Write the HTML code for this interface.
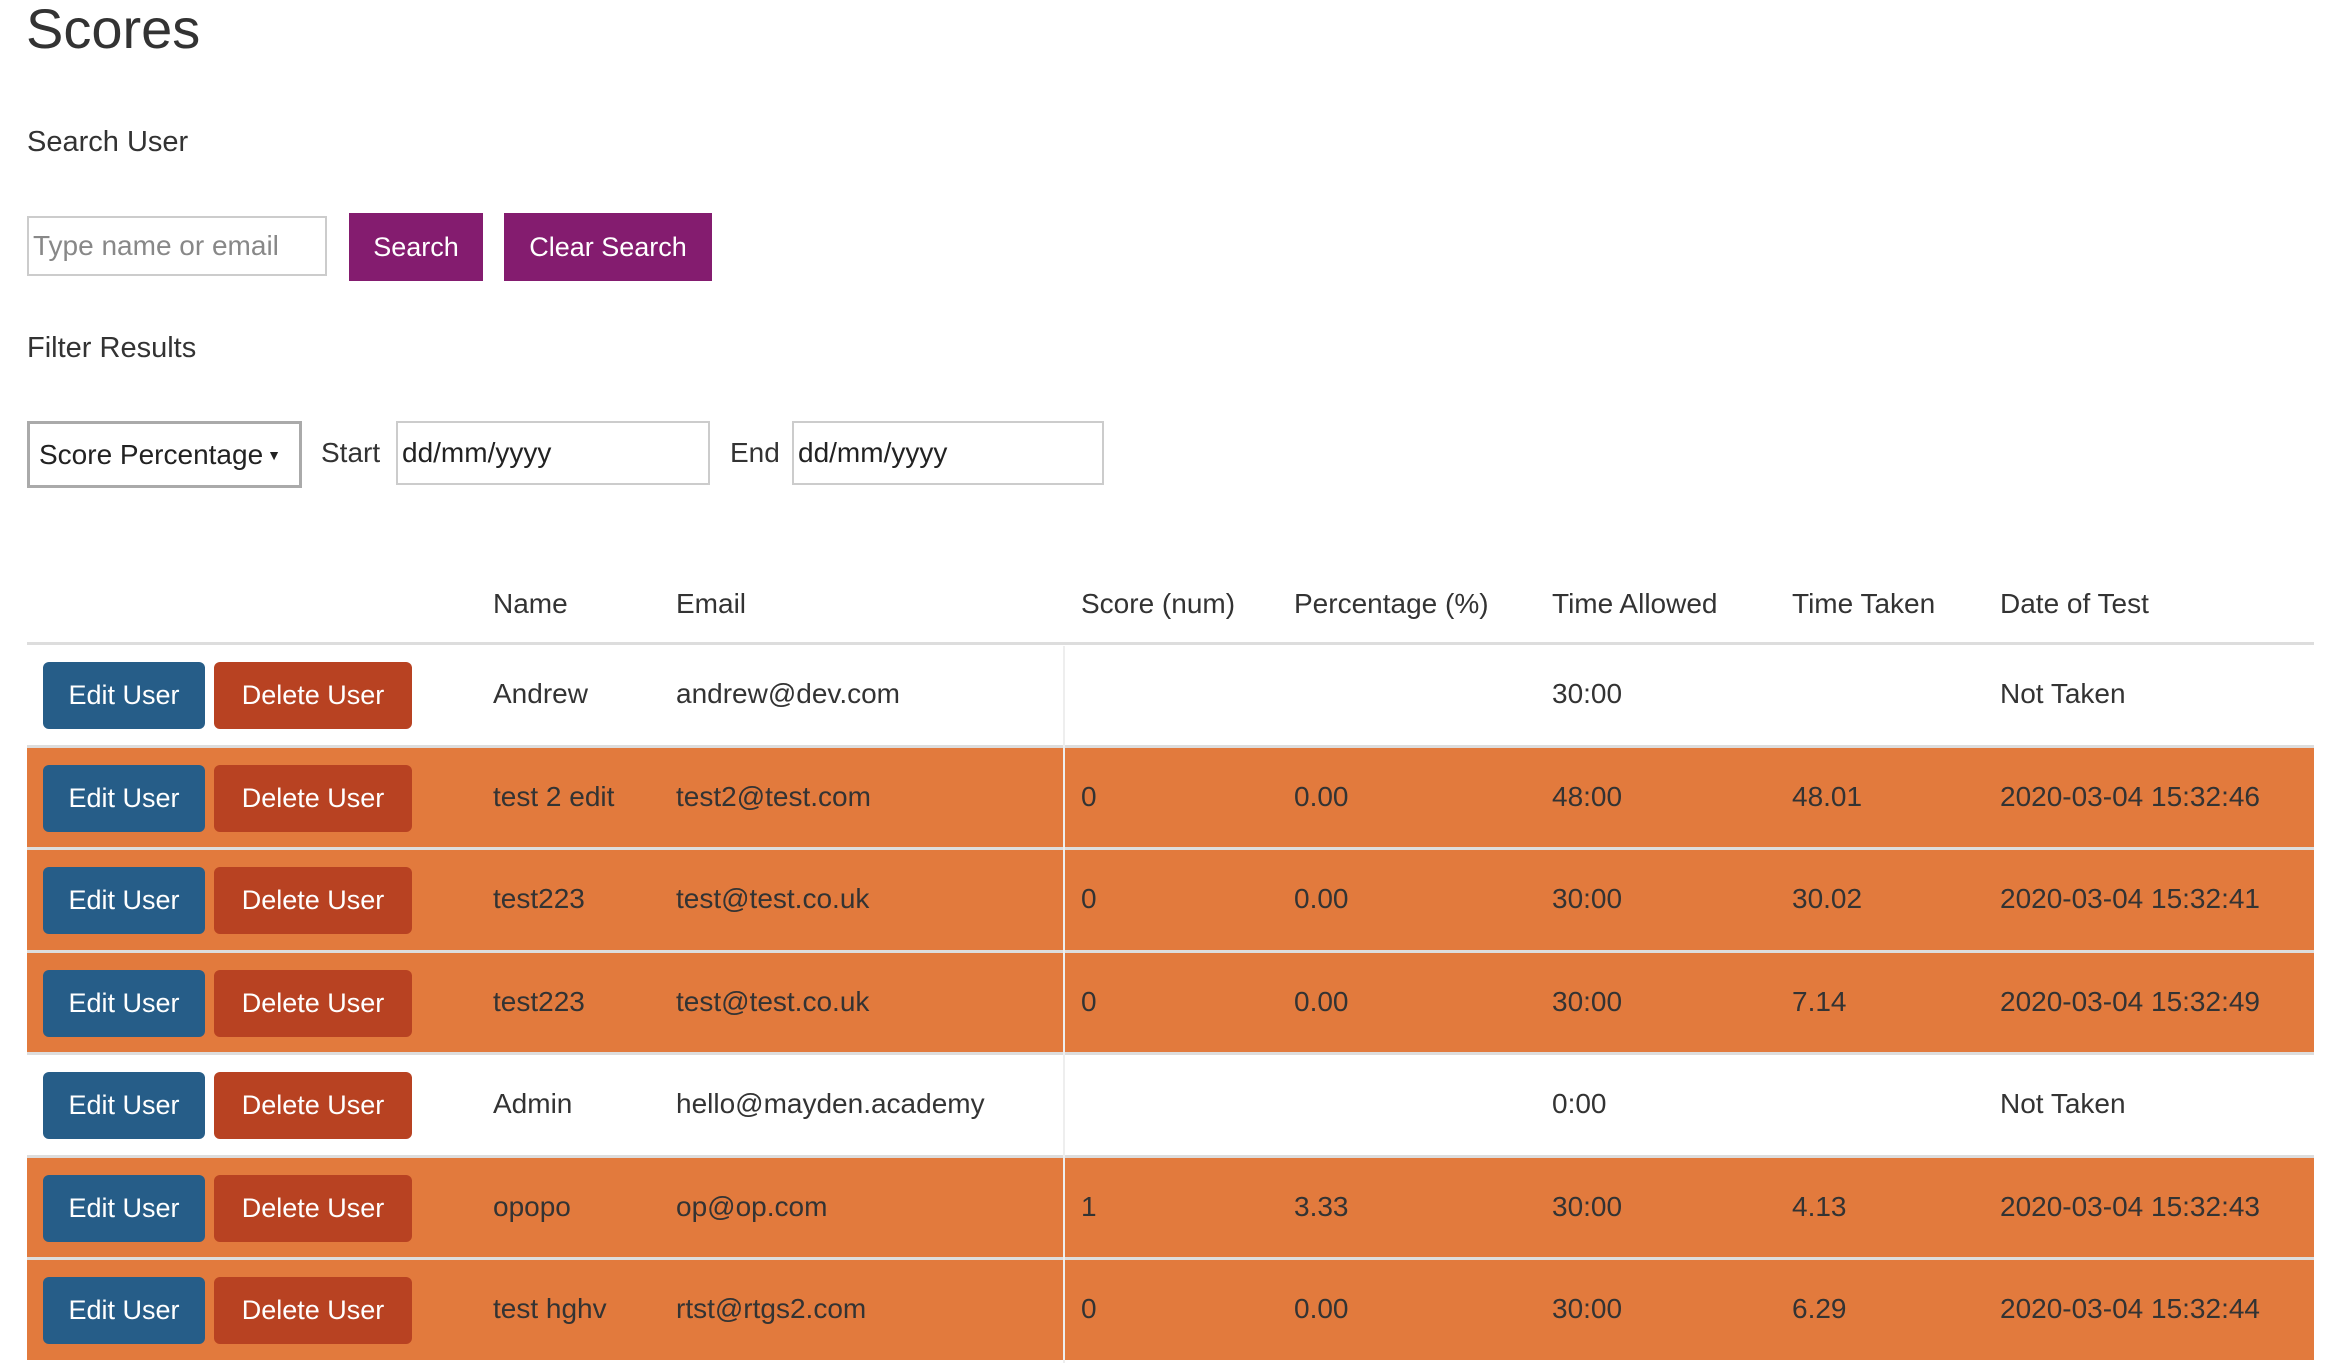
<!DOCTYPE html>
<html><head><meta charset="utf-8"><style>
*{box-sizing:border-box;margin:0;padding:0}
body{width:2338px;height:1363px;overflow:hidden;background:#fff;font-family:"Liberation Sans",sans-serif;color:#333;position:relative}
.a{position:absolute;white-space:nowrap}
.t{font-size:28px;line-height:1}
.btn{position:absolute;color:#fff;font-size:27px;display:flex;align-items:center;justify-content:center}
.inp{position:absolute;border:2px solid #ccc;background:#fff;font-size:28px;display:flex;align-items:center;padding-left:4px}
.row{position:absolute;left:27px;width:2287px;height:103px;border-top:3px solid #ddd}
.o{background:#e27a3d}
.vl{position:absolute;left:1063px;top:646px;width:2px;height:717px;background:#eee}
</style></head><body>
<div class="a" style="left:26px;top:-2px;font-size:56px;line-height:1.1">Scores</div>
<div class="a t" style="left:27px;top:128px;font-size:29px">Search User</div>
<div class="inp" style="left:27px;top:216px;width:300px;height:60px;color:#888">Type name or email</div>
<div class="btn" style="left:349px;top:213px;width:134px;height:68px;background:#841c6f">Search</div>
<div class="btn" style="left:504px;top:213px;width:208px;height:68px;background:#841c6f">Clear Search</div>
<div class="a t" style="left:27px;top:334px;font-size:29px">Filter Results</div>
<div class="inp" style="left:27px;top:421px;width:275px;height:67px;border:3px solid #aaa;padding-left:9px;color:#222">Score Percentage<span style="font-size:14px;margin-left:4px">▼</span></div>
<div class="a t" style="left:321px;top:439px">Start</div>
<div class="inp" style="left:396px;top:421px;width:314px;height:64px;color:#222">dd/mm/yyyy</div>
<div class="a t" style="left:730px;top:439px">End</div>
<div class="inp" style="left:792px;top:421px;width:312px;height:64px;color:#222">dd/mm/yyyy</div>

<div class="a t" style="left:493px;top:590px">Name</div>
<div class="a t" style="left:676px;top:590px">Email</div>
<div class="a t" style="left:1081px;top:590px">Score (num)</div>
<div class="a t" style="left:1294px;top:590px">Percentage (%)</div>
<div class="a t" style="left:1552px;top:590px">Time Allowed</div>
<div class="a t" style="left:1792px;top:590px">Time Taken</div>
<div class="a t" style="left:2000px;top:590px">Date of Test</div>

<div id="rows"></div>
<script>
var d=[
["Andrew","andrew@dev.com","","","30:00","","Not Taken",0],
["test 2 edit","test2@test.com","0","0.00","48:00","48.01","2020-03-04 15:32:46",1],
["test223","test@test.co.uk","0","0.00","30:00","30.02","2020-03-04 15:32:41",1],
["test223","test@test.co.uk","0","0.00","30:00","7.14","2020-03-04 15:32:49",1],
["Admin","hello@mayden.academy","","","0:00","","Not Taken",0],
["opopo","op@op.com","1","3.33","30:00","4.13","2020-03-04 15:32:43",1],
["test hghv","rtst@rtgs2.com","0","0.00","30:00","6.29","2020-03-04 15:32:44",1]];
var xs=[493,676,1081,1294,1552,1792,2000],h="";
d.forEach(function(r,i){var y=Math.round(642+i*102.5);
h+='<div class="row'+(r[7]?' o':'')+'" style="top:'+y+'px"></div>';
h+='<div class="btn" style="left:43px;top:'+(y+20)+'px;width:162px;height:67px;background:#265d88;border-radius:6px">Edit User</div>';
h+='<div class="btn" style="left:214px;top:'+(y+20)+'px;width:198px;height:67px;background:#b84222;border-radius:6px">Delete User</div>';
for(var k=0;k<7;k++)h+='<div class="a t" style="left:'+xs[k]+'px;top:'+(y+38)+'px">'+r[k]+'</div>';});
h+='<div class="vl"></div>';
document.getElementById("rows").innerHTML=h;
</script>
</body></html>
